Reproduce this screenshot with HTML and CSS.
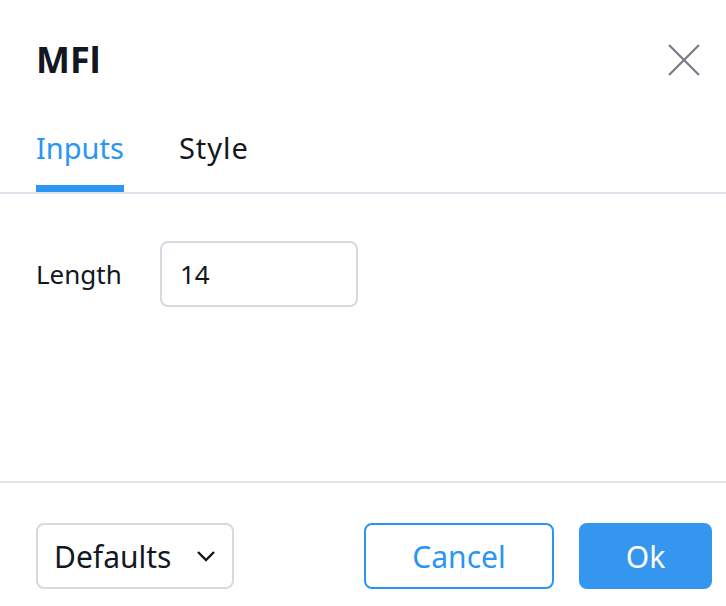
FILE: index.html
```html
<!DOCTYPE html>
<html lang="en">
<head>
<meta charset="utf-8">
<title>MFI</title>
<link rel="stylesheet" href="styles.css">
</head>
<body>
<div class="dialog">
  <div class="header">
    <div class="title">MFl</div>
    <button class="close" aria-label="Close">
      <svg width="34" height="34" viewBox="0 0 34 34"><path d="M2 2L32 32M32 2L2 32" stroke="#787b86" stroke-width="2.2" fill="none"/></svg>
    </button>
  </div>
  <div class="tabs">
    <div class="tab active">Inputs</div>
    <div class="tab">Style</div>
  </div>
  <div class="content">
    <div class="row">
      <label class="label">Length</label>
      <div class="input">14</div>
    </div>
  </div>
  <div class="footer">
    <div class="select">
      <span>Defaults</span>
      <svg width="20" height="12" viewBox="0 0 20 12"><path d="M2 2L10 10L18 2" stroke="#131722" stroke-width="2.4" fill="none"/></svg>
    </div>
    <div class="spacer"></div>
    <div class="btn btn-outline">Cancel</div>
    <div class="btn btn-primary">Ok</div>
  </div>
</div>
</body>
</html>
```
FILE: styles.css
```css
* { box-sizing: border-box; }
html, body { margin: 0; padding: 0; background: #fff; }
body { font-family: "Noto Sans", "DejaVu Sans", sans-serif; color: #131722; }
.dialog { width: 726px; height: 606px; display: flex; flex-direction: column; }
.header { height: 104px; padding: 16px 24px 0 36px; display: flex; align-items: center; justify-content: space-between; }
.title { font-size: 36px; font-weight: 700; line-height: 1; }
.close { border: 0; background: none; padding: 0; width: 34px; height: 34px; margin-right: 1px; display: flex; }
.tabs { height: 90px; display: flex; gap: 55px; padding-left: 36px; border-bottom: 2px solid #e0e3eb; }
.tab { height: 88px; display: flex; align-items: center; font-size: 29px; border-bottom: 7px solid transparent; padding-top: 6px; }
.tab.active { color: #2a96f2; border-bottom-color: #2a96f2; }
.tab + .tab { letter-spacing: 1px; }
.content { height: 289px; padding: 47px 0 0 36px; border-bottom: 2px solid #e0e3eb; }
.row { display: flex; align-items: center; gap: 40px; }
.label { font-size: 26px; width: 84px; }
.input { width: 198px; height: 66px; border: 2px solid #d6d9e0; border-radius: 8px; padding-left: 18px; font-size: 26px; display: flex; align-items: center; }
.footer { flex: 1; display: flex; align-items: flex-start; padding: 40px 14px 0 36px; gap: 25px; }
.spacer { flex: 1; }
.select { width: 198px; height: 66px; border: 2px solid #d6d9e0; border-radius: 8px; display: flex; align-items: center; justify-content: space-between; padding: 0 16px 0 16px; font-size: 30px; }
.btn { height: 66px; border-radius: 8px; display: flex; align-items: center; justify-content: center; font-size: 30px; }
.btn-outline { width: 190px; border: 2px solid #2a96f2; color: #2a96f2; }
.btn-primary { width: 133px; background: #3596f0; color: #fff; }
```
